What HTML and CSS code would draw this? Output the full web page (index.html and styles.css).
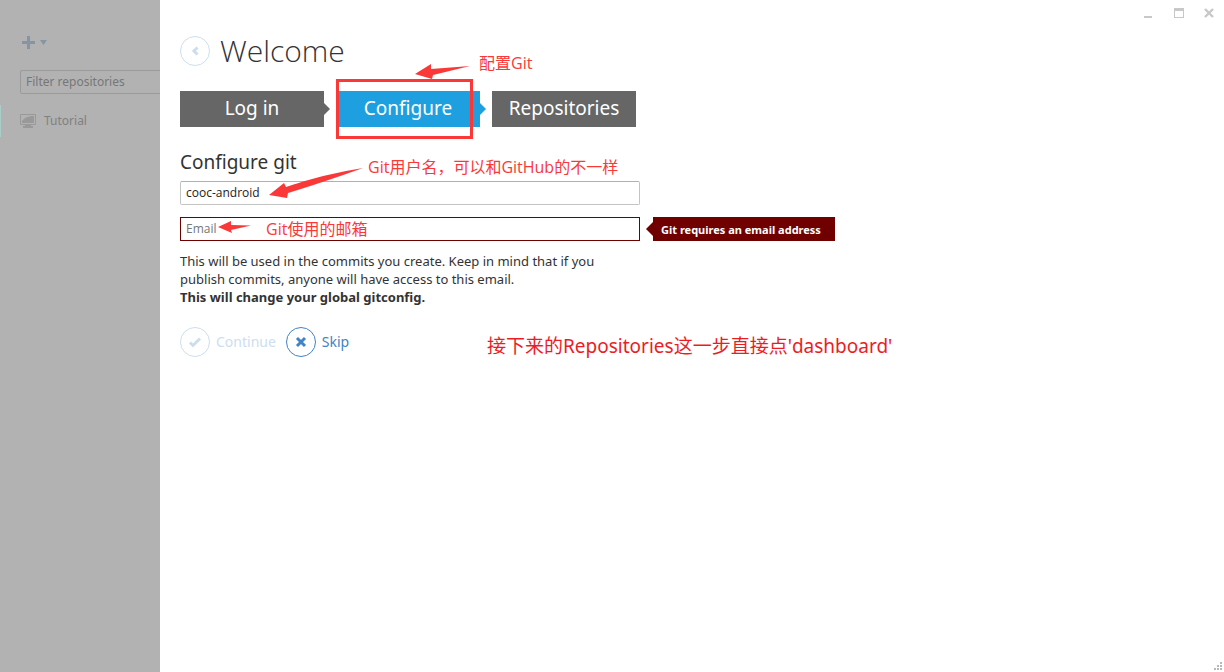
FILE: index.html
```html
<!DOCTYPE html>
<html lang="en">
<head>
<meta charset="utf-8">
<title>Welcome</title>
<link rel="stylesheet" href="styles.css">
</head>
<body>
<aside class="sidebar">
  <button class="add" type="button" aria-label="Add repository">
    <svg width="28" height="14" viewBox="0 0 28 14"><path d="M5 0h3v5h5v3H8v5H5V8H0V5h5zM18 4h7l-3.500 5z" fill="#8495a6"/></svg>
  </button>
  <input class="filter" type="text" placeholder="Filter repositories" aria-label="Filter repositories">
  <a class="repo" href="#">
    <svg width="16" height="14" viewBox="0 0 16 14"><path d="M.5.5h15v10H.5z" fill="none" stroke="#999"/><path d="M2 9V7c2-3 6-5 12-5v7zM5 11h6v1h2v2H3v-2h2z" fill="#999"/></svg>
    <span>Tutorial</span>
  </a>
  <span class="marker"></span>
</aside>
<main class="main">
  <header class="title">
    <button class="round faded" type="button" aria-label="Back">
      <svg width="30" height="30" viewBox="0 0 30 30"><circle cx="15" cy="15" r="14.500"/><path d="M17.500 11.500 14 15l3.500 3.500" stroke-width="3"/></svg>
    </button>
    <h1>Welcome</h1>
  </header>
  <nav class="steps">
    <a class="step" href="#">Log in</a>
    <a class="step current" href="#">Configure</a>
    <a class="step last" href="#">Repositories</a>
  </nav>
  <form class="form">
    <h2>Configure git</h2>
    <input class="field" type="text" value="cooc-android" aria-label="Name">
    <div class="row">
      <input class="field invalid" type="text" placeholder="Email" aria-label="Email">
      <span class="error">Git requires an email address</span>
    </div>
    <p class="help">This will be used in the commits you create. Keep in mind that if you publish commits, anyone will have access to this email.<br><strong>This will change your global gitconfig.</strong></p>
    <div class="actions">
      <button class="round faded" type="button">
        <svg width="30" height="30" viewBox="0 0 30 30"><circle cx="15" cy="15" r="14.500"/><path d="m10 15.500 3 3 7-7" stroke-width="3"/></svg>
        <span>Continue</span>
      </button>
      <button class="round" type="button">
        <svg width="30" height="30" viewBox="0 0 30 30"><circle cx="15" cy="15" r="14.500"/><path d="m11 11 8 8m0-8-8 8" stroke-width="3"/></svg>
        <span>Skip</span>
      </button>
    </div>
  </form>
</main>
<div class="window-controls">
  <button type="button" aria-label="Minimize"><svg width="10" height="10"><path d="M0 8h8v2H0z" fill="#c8c8c8"/></svg></button>
  <button type="button" aria-label="Maximize"><svg width="10" height="10"><path d="M0 0h10v10H0zM1 3v6h8V3z" fill="#c8c8c8" fill-rule="evenodd"/></svg></button>
  <button type="button" aria-label="Close"><svg width="10" height="10"><path d="m1 1 8 8m0-8-8 8" stroke="#c8c8c8" stroke-width="2.400"/></svg></button>
</div>
<svg class="grip" width="10" height="10"><path d="M6 0h2v2H6zM3 3h2v2H3zM6 3h2v2H6zM0 6h2v2H0zM3 6h2v2H3zM6 6h2v2H6z" fill="#b8b8b8"/></svg>
<svg class="arrows" width="480" height="240" viewBox="0 0 480 240">
  <path d="M415 74 431 64V69L470 66 433 75 432 79z"/>
  <path d="M269 195 284 183 286 187Q324 174 363 168 324 182 288 193L287 198z"/>
  <path d="M218 227 231 221V225L251 225.500 231 230 232 233z"/>
</svg>
<div class="highlight"></div>
<div class="note note-step">配置Git</div>
<div class="note note-name">Git用户名，可以和GitHub的不一样</div>
<div class="note note-email">Git使用的邮箱</div>
<div class="note note-next">接下来的Repositories这一步直接点'dashboard'</div>
</body>
</html>
```

FILE: styles.css
```css
* { box-sizing: border-box; }
body {
  margin: 0;
  min-height: 100vh;
  display: flex;
  position: relative;
  overflow: hidden;
  background: #fff;
  color: #333;
  font: 13px/18px "Noto Sans", "Noto Sans CJK SC", sans-serif;
}
button { border: 0; padding: 0; background: none; font: inherit; cursor: pointer; }
input { font: inherit; outline: 0; }
a { color: inherit; text-decoration: none; }
svg { display: block; flex: none; }

.sidebar {
  position: relative;
  flex: 0 0 160px;
  display: flex;
  flex-direction: column;
  align-items: flex-start;
  padding: 36px 0 0 20px;
  overflow: hidden;
  background: #b2b2b2;
  color: #808080;
  font-size: 12px;
}
.add { padding-left: 2px; }
.filter {
  width: 200px;
  height: 24px;
  margin-top: 20px;
  padding: 0 5px 2px;
  border: 1px solid #9a9a9a;
  border-radius: 2px;
  background: transparent;
  color: #777;
}
.filter::placeholder { color: #777; opacity: 1; }
.repo { display: flex; align-items: center; gap: 8px; margin-top: 18px; }
.marker {
  position: absolute;
  left: 0;
  top: 105px;
  width: 1px;
  height: 32px;
  background: #a9cdc7;
}

.main { flex: 1; min-width: 0; padding: 30px 20px; }
.title { display: flex; align-items: center; gap: 10px; height: 41px; }
h1 { margin: 0; font: 300 30px/40px "Open Sans", "Noto Sans", sans-serif; }
.round { display: flex; align-items: center; gap: 6px; color: #4183c4; font-size: 14px; }
.round svg { fill: none; stroke: currentColor; }
.faded { color: #ccdeee; }

.steps { display: flex; gap: 12px; margin-top: 20px; }
.step {
  position: relative;
  width: 144px;
  height: 36px;
  background: #666;
  color: #fff;
  font-size: 19px;
  line-height: 34px;
  text-align: center;
}
.step::after {
  content: "";
  position: absolute;
  left: 100%;
  top: 12px;
  border: 6px solid transparent;
  border-right: 0;
  border-left-color: #666;
}
.step.current { background: #1d9fe0; }
.step.current::after { border-left-color: #1d9fe0; }
.step.last::after { display: none; }

.form { margin-top: 22px; }
h2 { margin: 0 0 6px; font-size: 19px; line-height: 26px; font-weight: 400; }
.field {
  display: block;
  width: 460px;
  height: 24px;
  padding: 0 5px 1px;
  border: 1px solid #c4c4c4;
  border-top-color: #b0b0b0;
  border-radius: 2px;
  background: #fff;
  color: #222;
  font-family: "Open Sans", "Noto Sans", sans-serif;
  font-size: 12px;
}
.row { display: flex; gap: 13px; margin-top: 12px; }
.field.invalid { border-color: #700000; border-radius: 0; }
.field::placeholder { color: #777; opacity: 1; }
.error {
  position: relative;
  padding: 1px 14px 0 8px;
  background: #700000;
  color: #fff;
  font-size: 11px;
  font-weight: 700;
  line-height: 23px;
}
.error::before {
  content: "";
  position: absolute;
  right: 100%;
  top: 5px;
  border: 7px solid transparent;
  border-left: 0;
  border-right-color: #700000;
}
.help { max-width: 440px; margin: 11px 0 21px; }
.actions { display: flex; gap: 10px; }

.window-controls { position: absolute; top: 8px; right: 10px; display: flex; gap: 20px; }
.grip { position: absolute; right: 0; bottom: 0; }

.arrows { position: absolute; left: 0; top: 0; fill: #fb3838; pointer-events: none; }
.highlight {
  position: absolute;
  left: 336px;
  top: 79px;
  width: 137px;
  height: 60px;
  border: 3px solid #fb3838;
  pointer-events: none;
}
.note {
  position: absolute;
  color: #fb3838;
  font-family: "Open Sans", "Noto Sans CJK SC", sans-serif;
  font-size: 16px;
  line-height: 24px;
  white-space: nowrap;
  pointer-events: none;
}
.note-step { left: 479px; top: 51px; }
.note-name { left: 368px; top: 155px; }
.note-email { left: 266px; top: 217px; }
.note-next { left: 487px; top: 334px; color: #ed1c24; font-family: "Noto Sans", "Noto Sans CJK SC", sans-serif; font-size: 19px; }
```
